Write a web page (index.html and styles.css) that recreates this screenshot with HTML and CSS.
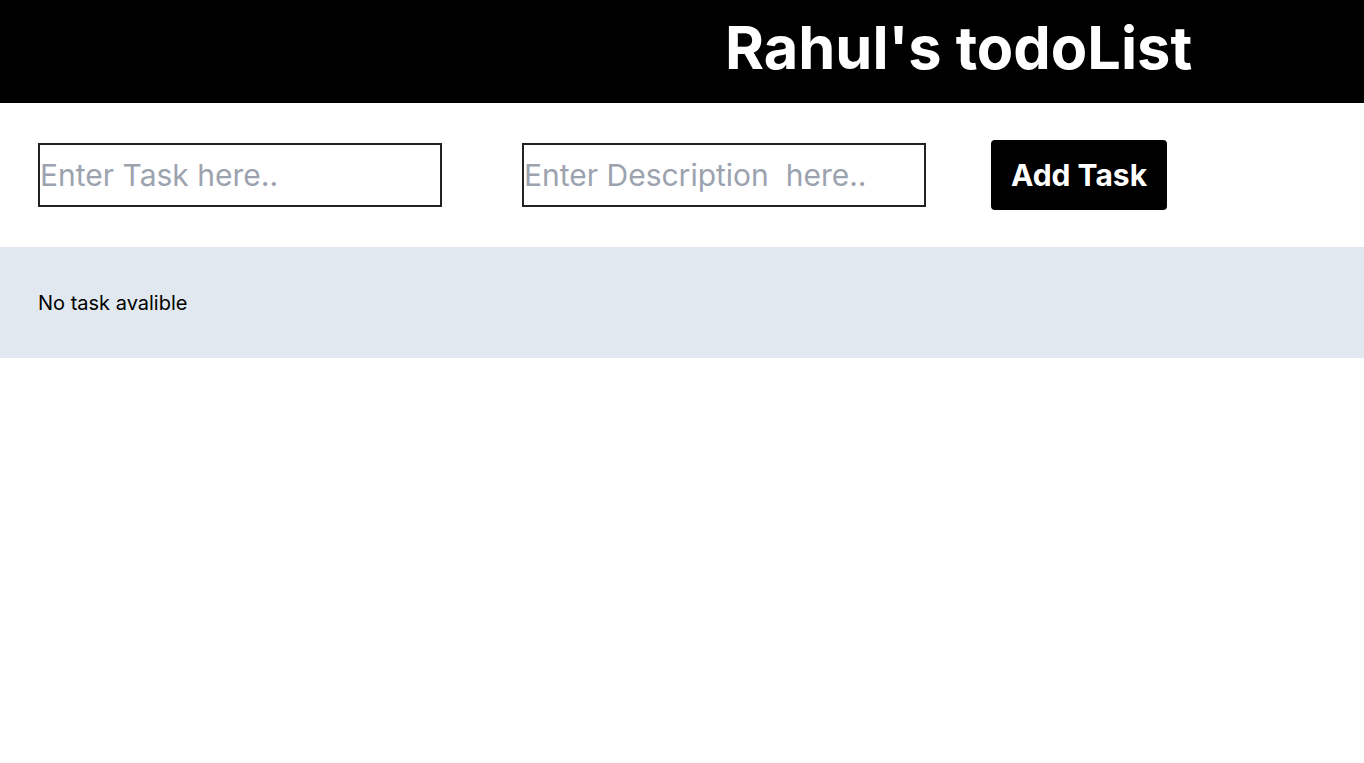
FILE: index.html
```html
<!DOCTYPE html>
<html lang="en">
<head>
<meta charset="utf-8">
<title>Rahul's todoList</title>
<link rel="stylesheet" href="styles.css">
</head>
<body>
  <header class="header">
    <h1 class="title">Rahul's todoList</h1>
  </header>
  <section class="form">
    <input class="field" type="text" placeholder="Enter Task here..">
    <input class="field field-desc" type="text" placeholder="Enter Description  here..">
    <button class="add-btn" type="button">Add Task</button>
  </section>
  <section class="list">
    <p class="empty">No task avalible</p>
  </section>
</body>
</html>
```

FILE: styles.css
```css
* { box-sizing: border-box; }
html, body { margin: 0; padding: 0; }
body {
  font-family: Inter, "Noto Sans", sans-serif;
  background: #fff;
  color: #000;
}
.header {
  background: #000;
  height: 103px;
  display: flex;
  align-items: center;
  padding-left: 725px;
}
.title {
  margin: 0;
  color: #fff;
  font-size: 59.5px;
  line-height: 1;
  font-weight: 700;
  padding-bottom: 8px;
}
.form {
  display: flex;
  align-items: center;
  padding: 37px 38px 37px;
}
.field {
  width: 404px;
  height: 64px;
  border: 2px solid #222;
  padding: 0;
  font-family: Inter, "Noto Sans", sans-serif;
  font-size: 30px;
  color: #000;
  outline: none;
  background: #fff;
}
.field::placeholder { color: #9ca3af; }
.field-desc { margin-left: 80px; }
.add-btn {
  margin-left: 65px;
  width: 176px;
  height: 70px;
  background: #000;
  color: #fff;
  border: none;
  border-radius: 4px;
  font-family: Inter, "Noto Sans", sans-serif;
  font-size: 30px;
  font-weight: 700;
  padding: 0;
}
.list {
  background: #e2e8f0;
  height: 111px;
  display: flex;
  align-items: center;
  padding: 1px 38px 0;
}
.empty {
  margin: 0;
  font-size: 20px;
  line-height: 28px;
}
```
